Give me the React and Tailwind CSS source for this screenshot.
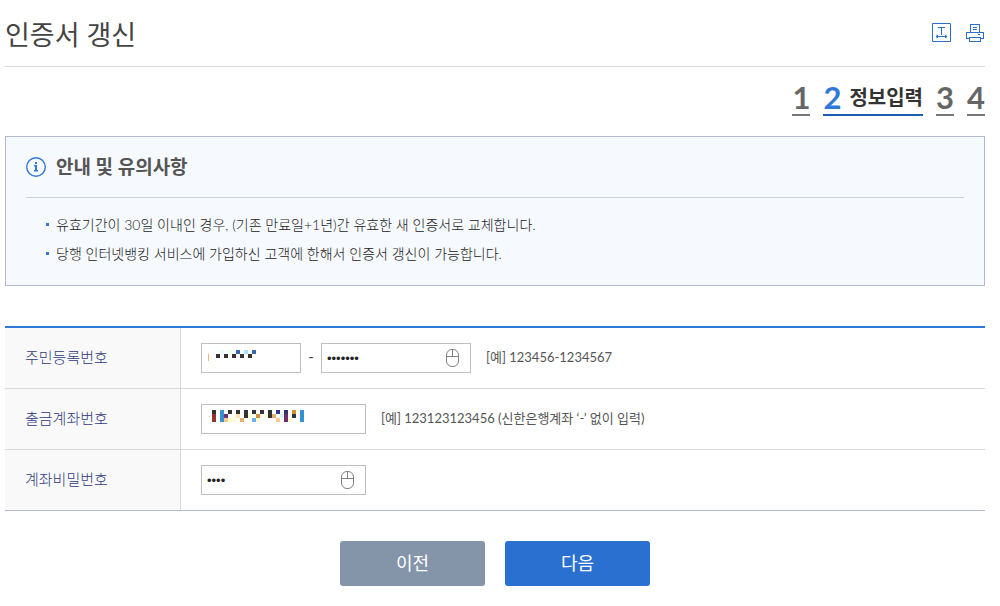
const notices = [
  '유효기간이 30일 이내인 경우, (기존 만료일+1년)간 유효한 새 인증서로 교체합니다.',
  '당행 인터넷뱅킹 서비스에 가입하신 고객에 한해서 인증서 갱신이 가능합니다.',
];

const steps = [
  { no: 1 },
  { no: 2, label: '정보입력' },
  { no: 3 },
  { no: 4 },
];

// mosaic cells: [column, row, colour, rows spanned], each cell is 4px
const idMask = [
  [1, 0, '#e8fffc'], [3, 0, '#e8fffc'], [5, 0, '#3468b0'], [7, 0, '#a8e4ff'], [9, 0, '#3468b0'],
  [0, 1, '#333'], [2, 1, '#333'], [4, 1, '#333'], [6, 1, '#333'], [8, 1, '#333'],
];

const accountMask = [
  [0, 0, '#333'], [0, 1, '#923333', 2],
  [2, 0, '#3490d0', 3],
  [3, 1, '#6c3070'], [3, 2, '#ffc890'],
  [4, 0, '#333'], [4, 2, '#ffffd0'],
  [5, 2, '#ffffd0'],
  [6, 0, '#333'], [6, 1, '#ffe4b0'],
  [7, 2, '#e8b070'],
  [8, 0, '#333'], [8, 1, '#333'],
  [9, 1, '#ffffd0'],
  [10, 0, '#333'], [10, 2, '#68b0f0'],
  [11, 1, '#d09030'], [11, 2, '#ffffd0'],
  [12, 0, '#333'],
  [13, 1, '#ffffd8'],
  [14, 0, '#333'], [14, 1, '#333'],
  [15, 1, '#e8b070'],
  [16, 0, '#333390'], [16, 2, '#ffc890'],
  [17, 1, '#c8ffff'],
  [18, 0, '#33336c'], [18, 1, '#6c3070', 2],
  [19, 2, '#ffffd0'],
  [20, 0, '#d09030'], [20, 1, '#333'],
  [22, 0, '#3490d0', 3],
];

function Mosaic({ cells, width, height, className }) {
  return (
    <svg width={width} height={height} className={`overflow-visible ${className}`} shapeRendering="crispEdges" aria-hidden="true">
      {cells.map(([x, y, fill, span = 1]) => (
        <rect key={`${x}-${y}`} x={x * 4} y={y * 4} width="4" height={span * 4} fill={fill} />
      ))}
    </svg>
  );
}

function TextWidthIcon() {
  return (
    <svg width="19" height="19" viewBox="0 0 19 19" fill="none" stroke="#2a70c8">
      <path d="M0.5 0.5h18v18H0.5z M6 4.5h7 M9.5 4v8 M4 13.5h11" />
      <path d="M5.5 12v3M13.500 12v3" />
      <path d="M4.500 11.500v4M14.500 11.500v4" strokeOpacity="0.4" />
    </svg>
  );
}

function PrintIcon() {
  return (
    <svg width="18" height="18" viewBox="0 0 18 18" fill="none" stroke="#2a70c8" shapeRendering="crispEdges">
      <path d="M4.5 8V0.5h9V8M7 3.5h4M7 5.5h4" />
      <path d="M3 14.5H0.5v-6h17v6H15M12 10.5h2" />
      <rect x="3.5" y="13.5" width="11" height="4" />
    </svg>
  );
}

function InfoIcon() {
  return (
    <svg width="20" height="20" viewBox="0 0 20 20" fill="none">
      <circle cx="10" cy="10" r="9.3" stroke="#3079d6" strokeWidth="1.4" />
      <path d="M9 5h2v2H9zM8 8h3v5h1v1.500H8V13h1V9.500H8z" fill="#3079d6" />
    </svg>
  );
}

function KeypadButton() {
  return (
    <button type="button" aria-label="마우스 입력기" className="absolute right-3 top-[6px]">
      <svg width="13" height="18" viewBox="0 0 13 18" fill="none" stroke="#808080">
        <rect x="0.5" y="0.5" width="12" height="17" rx="5.500" />
        <path d="M0.5 7.5h12M6.5 0.5v7" />
      </svg>
    </button>
  );
}

const field = 'block h-[30px] w-full border border-[#bfbfbf] bg-white px-[5px] text-[#222]';

function Row({ id, label, last, children }) {
  const line = last ? 'border-b-[#b4b8d0]' : 'border-b-[#d9d9d9]';
  return (
    <tr>
      <th scope="row" className={`w-44 border-b border-r border-r-[#d9d9d9] bg-[#f9f9f9] px-5 pb-[2px] text-left font-light text-[#2f3a7c] ${line}`}>
        <label htmlFor={id}>{label}</label>
      </th>
      <td className={`border-b px-5 py-[15px] ${line}`}>
        <div className="flex items-center">{children}</div>
      </td>
    </tr>
  );
}

function Hint({ children }) {
  return <span className="ml-[15px] pb-[2px] text-[13px] text-[#555]">{children}</span>;
}

export default function App() {
  return (
    <main className="bg-white pl-[5px] pr-[15px] pb-5 font-['Lato','Noto_Sans_CJK_KR',sans-serif] text-[15px] leading-5 text-[#444]">
      <header className="flex items-center justify-between border-b border-[#d9d9d9] pb-3 pt-4">
        <h1 className="text-[27px] leading-[38px]">인증서 갱신</h1>
        <div className="flex items-center gap-[15px] pb-[5px] pr-px">
          <button type="button" aria-label="글자 크기"><TextWidthIcon /></button>
          <button type="button" aria-label="인쇄"><PrintIcon /></button>
        </div>
      </header>

      <ol className="flex justify-end gap-[13px] pt-[13px] font-bold text-[#666]">
        {steps.map(({ no, label }) => (
          <li
            key={no}
            aria-current={label ? 'step' : undefined}
            className={`flex h-9 items-center gap-2 border-b-2 ${label ? 'border-[#1c5fb0]' : 'border-[#777]'}`}
          >
            <span className={`text-[31px] leading-8 ${label ? 'text-[#3079d6]' : ''}`}>{no}</span>
            {label && <span className="text-xl leading-8 text-[#333]">{label}</span>}
          </li>
        ))}
      </ol>

      <section className="mt-5 border border-[#b4b8d0] bg-[#f6f9fe] px-5 pb-[17px] pt-4">
        <h2 className="flex items-center gap-[10px] border-b border-[#ccd3d8] pb-4 text-[19px] leading-7 font-bold text-[#555]">
          <InfoIcon />
          안내 및 유의사항
        </h2>
        <ul className="pl-5 pt-3 text-sm leading-[29px] font-light text-[#222]">
          {notices.map((text) => (
            <li key={text} className="flex items-center gap-[7px]">
              <span className="size-[3px] bg-[#3079d6]" />
              {text}
            </li>
          ))}
        </ul>
      </section>

      <form className="mt-10">
        <table className="w-full border-separate border-spacing-0 border-t-2 border-[#3079d6]">
          <tbody>
            <Row id="idFront" label="주민등록번호">
              <div className="relative w-[100px]">
                <input id="idFront" type="text" className={field} />
                <Mosaic cells={idMask} width={40} height={8} className="absolute left-[15px] top-[7px]" />
                <span className="absolute left-[7px] top-[11px] h-[7px] w-px bg-[#f0b868]" />
              </div>
              <span className="w-5 pb-1 text-center">-</span>
              <div className="relative w-[150px]">
                <input type="password" aria-label="주민등록번호 뒷자리" defaultValue="0000000" className={`${field} font-['Liberation_Sans',sans-serif] text-[13px]`} />
                <KeypadButton />
              </div>
              <Hint>[예] 123456-1234567</Hint>
            </Row>
            <Row id="account" label="출금계좌번호">
              <div className="relative w-[165px]">
                <input id="account" type="text" className={field} />
                <Mosaic cells={accountMask} width={92} height={12} className="absolute left-[11px] top-[6px]" />
                <span className="absolute left-2 top-3 size-px bg-[#f0b868]" />
              </div>
              <Hint>[예] 123123123456 (신한은행계좌 ‘-’ 없이 입력)</Hint>
            </Row>
            <Row id="accountPw" label="계좌비밀번호" last>
              <div className="relative w-[165px]">
                <input id="accountPw" type="password" defaultValue="0000" className={`${field} font-['Liberation_Sans',sans-serif] text-[13px]`} />
                <KeypadButton />
              </div>
            </Row>
          </tbody>
        </table>

        <div className="mt-[30px] flex justify-center gap-5 text-lg text-white">
          <button type="button" className="h-[45px] w-[145px] rounded-[3px] bg-[#8494a9] pb-[2px]">이전</button>
          <button type="button" className="h-[45px] w-[145px] rounded-[3px] bg-[#2a70d0] pb-[2px]">다음</button>
        </div>
      </form>
    </main>
  );
}
